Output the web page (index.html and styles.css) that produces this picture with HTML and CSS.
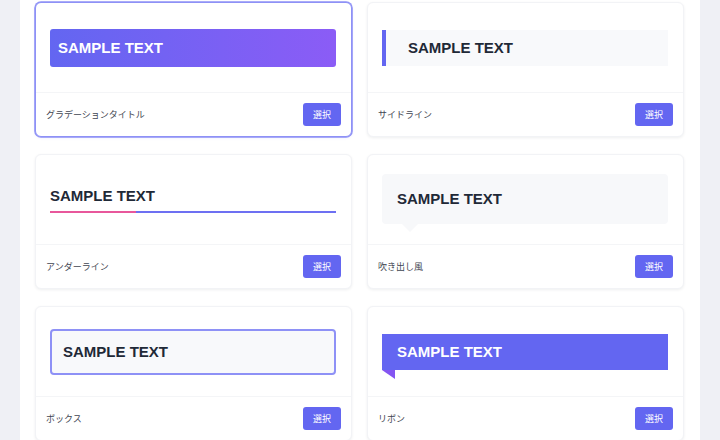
FILE: index.html
```html
<!DOCTYPE html>
<html lang="ja">
<head>
<meta charset="utf-8">
<title>見出しスタイル</title>
<link rel="stylesheet" href="styles.css">
</head>
<body>
<div class="page">
  <div class="grid">
    <div class="card selected">
      <div class="preview"><div class="sample s-gradient">SAMPLE TEXT</div></div>
      <div class="footer"><span class="label">グラデーションタイトル</span><button class="btn">選択</button></div>
    </div>
    <div class="card">
      <div class="preview"><div class="sample s-side">SAMPLE TEXT</div></div>
      <div class="footer"><span class="label">サイドライン</span><button class="btn">選択</button></div>
    </div>
    <div class="card">
      <div class="preview"><div class="sample s-under">SAMPLE TEXT</div></div>
      <div class="footer"><span class="label">アンダーライン</span><button class="btn">選択</button></div>
    </div>
    <div class="card">
      <div class="preview"><div class="sample s-balloon">SAMPLE TEXT</div></div>
      <div class="footer"><span class="label">吹き出し風</span><button class="btn">選択</button></div>
    </div>
    <div class="card">
      <div class="preview"><div class="sample s-box">SAMPLE TEXT</div></div>
      <div class="footer"><span class="label">ボックス</span><button class="btn">選択</button></div>
    </div>
    <div class="card">
      <div class="preview"><div class="sample s-ribbon">SAMPLE TEXT</div></div>
      <div class="footer"><span class="label">リボン</span><button class="btn">選択</button></div>
    </div>
  </div>
</div>
</body>
</html>
```

FILE: styles.css
```css
html, body {
  margin: 0;
  padding: 0;
  background: #eff0f5;
  font-family: "Liberation Sans", "Noto Sans CJK JP", sans-serif;
}

.page {
  margin: 0 20px;
  height: 440px;
  overflow: hidden;
  background: #ffffff;
  padding: 2px 16px 0 15px;
  box-sizing: border-box;
}

.grid {
  display: grid;
  grid-template-columns: 317px 317px;
  column-gap: 15px;
  row-gap: 17px;
}

.card {
  box-sizing: border-box;
  background: #ffffff;
  border: 1px solid #f2f3f6;
  border-radius: 6px;
  box-shadow: 0 1px 3px rgba(17, 24, 39, 0.07);
}

.card.selected {
  border-color: #8e91f6;
  box-shadow: 0 0 0 0.8px #8e91f6, 0 1px 3px rgba(99, 102, 241, 0.12);
}

.preview {
  height: 90px;
  box-sizing: border-box;
  display: flex;
  align-items: center;
  padding: 0 15px 0 14px;
  border-bottom: 1px solid #f4f5f7;
}

.footer {
  height: 43px;
  display: flex;
  align-items: center;
  justify-content: space-between;
  padding: 0 10px;
}

.label {
  font-family: "Noto Sans CJK JP", sans-serif;
  font-size: 9px;
  color: #3f4652;
}

.btn {
  width: 38px;
  height: 23px;
  border: none;
  border-radius: 3px;
  background: #6366f1;
  color: #ffffff;
  font-family: "Noto Sans CJK JP", sans-serif;
  font-size: 9px;
  padding: 0;
}

.sample {
  flex: 1;
  box-sizing: border-box;
  display: flex;
  align-items: center;
  font-family: "Liberation Sans", Arial, sans-serif;
  font-weight: bold;
  font-size: 15px;
  color: #1f2937;
  position: relative;
}

.s-gradient {
  height: 38px;
  padding-left: 8px;
  border-radius: 3px;
  color: #ffffff;
  background: linear-gradient(90deg, #6366f1, #8b5cf6);
}

.s-side {
  height: 36px;
  padding-left: 22px;
  background: #f8f9fb;
  border-left: 4px solid #6366f1;
}

.s-under {
  padding-bottom: 9px;
  background: linear-gradient(90deg, #e8579b 30%, #6d70f2 30%) left bottom / 100% 2px no-repeat;
}

.s-balloon {
  height: 50px;
  padding-left: 15px;
  background: #f7f8fa;
  border-radius: 4px;
  margin-bottom: 2px;
}

.s-balloon::after {
  content: "";
  position: absolute;
  left: 20px;
  top: 100%;
  width: 0;
  height: 0;
  border-top: 8px solid #f7f8fa;
  border-left: 8px solid transparent;
  border-right: 8px solid transparent;
}

.s-box {
  height: 46px;
  padding-left: 11px;
  background: #f8f9fb;
  border: 2px solid #8e91f6;
  border-radius: 4px;
}

.s-ribbon {
  height: 36px;
  padding-left: 15px;
  color: #ffffff;
  background: #6366f1;
}

.s-ribbon::after {
  content: "";
  position: absolute;
  left: 0;
  top: 100%;
  width: 0;
  height: 0;
  border-top: 9px solid #8455f2;
  border-left: 13px solid transparent;
}
```
